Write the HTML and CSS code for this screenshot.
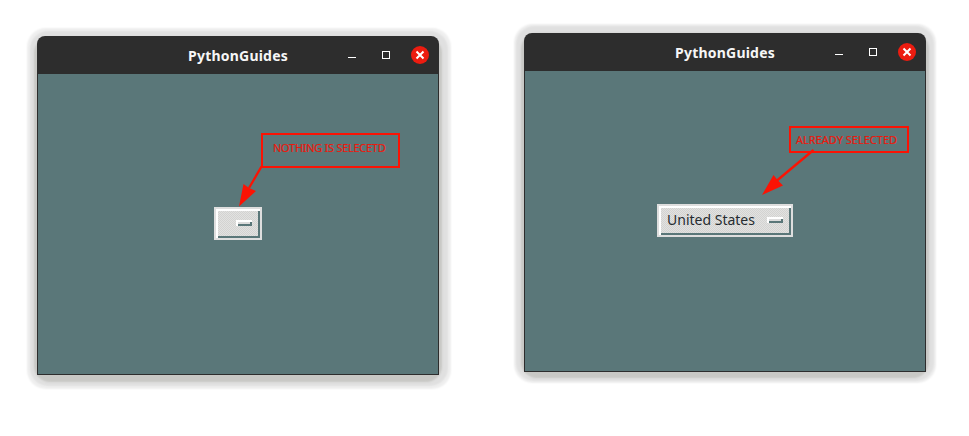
FILE: index.html
```html
<!DOCTYPE html>
<html lang="en">
<head>
<meta charset="utf-8">
<title>PythonGuides</title>
<link rel="stylesheet" href="styles.css">
</head>
<body>
<main class="desktop">
  <section class="window">
    <header class="titlebar">
      <h1 class="title">PythonGuides</h1>
      <div class="controls">
        <span class="minimize"></span>
        <span class="maximize"></span>
        <span class="close"><svg width="18" height="18" viewBox="0 0 18 18"><path d="M5.5 5.500L12.500 12.500M12.500 5.500L5.500 12.500" stroke="#fff" stroke-width="2"/></svg></span>
      </div>
    </header>
    <div class="canvas">
      <button class="option-menu"><span class="value"></span><span class="indicator"></span></button>
      <div class="note note-empty">NOTHING IS SELECETD</div>
      <svg class="arrow" width="400" height="300" viewBox="38 74 400 300"><path d="M261.5 166.5L249 188" stroke="#fb1304" stroke-width="2.300"/><path d="M239 206.5L243.5 184L249 188L256 191Z" fill="#fb1304"/></svg>
    </div>
  </section>
  <section class="window raised">
    <header class="titlebar">
      <h1 class="title">PythonGuides</h1>
      <div class="controls">
        <span class="minimize"></span>
        <span class="maximize"></span>
        <span class="close"><svg width="18" height="18" viewBox="0 0 18 18"><path d="M5.5 5.500L12.500 12.500M12.500 5.500L5.500 12.500" stroke="#fff" stroke-width="2"/></svg></span>
      </div>
    </header>
    <div class="canvas">
      <button class="option-menu"><span class="value">United States</span><span class="indicator"></span></button>
      <div class="note note-selected">ALREADY SELECTED</div>
      <svg class="arrow" width="400" height="300" viewBox="525 71 400 300"><path d="M813.5 150L777 180.500" stroke="#fb1304" stroke-width="2.300"/><path d="M762 195L773.500 175L777.500 180L783 185.500Z" fill="#fb1304"/></svg>
    </div>
  </section>
</main>
</body>
</html>
```
FILE: styles.css
```css
* { box-sizing: border-box; }

body {
  margin: 0;
  background: #fff;
  overflow: hidden;
}

.desktop {
  display: flex;
  align-items: flex-start;
  gap: 85px;
  height: 436px;
  padding: 36px 0 0 37px;
}

.window {
  position: relative;
  flex: none;
  width: 402px;
  height: 339px;
  background: #2d2d2d;
  border-radius: 8px 8px 0 0;
}

/* soft shadow with all four corners rounded, behind the frame */
.window::before {
  content: "";
  position: absolute;
  z-index: -1;
  inset: 8px;
  border-radius: 6px;
  box-shadow: 0 4px 2px 11px #c8c8c5, 1px 3px 2px 16px #e0e0e0, 1px 3px 2px 19px #efefef;
}

.raised { margin-top: -3px; }

.raised::before {
  box-shadow: 0 3px 2px 11px #c8c8c5, 0 1px 2px 16px #e0e0e0, 0 1px 2px 18px #efefef;
}

.titlebar {
  display: flex;
  justify-content: flex-end;
  align-items: center;
  height: 38px;
  padding-right: 10px;
}

.title {
  width: 100px;
  margin: 2px 60px 0 0;
  color: #f6f6f6;
  font: bold 14px/20px "Noto Sans", sans-serif;
  letter-spacing: 0.22px;
  white-space: nowrap;
}

.controls {
  display: flex;
  align-items: center;
}

.minimize {
  width: 8px;
  height: 1px;
  margin: 4px 26px 0 0;
  background: #fff;
}

.maximize {
  width: 8px;
  height: 8px;
  margin-right: 21px;
  border: 1px solid #fff;
}

.close {
  width: 18px;
  height: 18px;
  border-radius: 50%;
  background: #ec1c10;
}

.close svg { display: block; }

.canvas {
  position: relative;
  display: flex;
  justify-content: center;
  align-items: flex-start;
  height: 300px;
  margin: 0 1px;
  padding-top: 133px;
  background: #5a7779;
}

.option-menu {
  display: flex;
  justify-content: space-between;
  align-items: center;
  gap: 12px;
  height: 33px;
  padding: 0 8px;
  border: 2px solid #dedede;
  background: repeating-conic-gradient(#d3d3d1 0 25%, #e2e2e1 0 50%) 0 0 / 2px 2px;
  box-shadow: inset 2px 2px #fff, inset -2px -2px #5a7779;
  color: #262c30;
  font: 14px/20px "Noto Sans", sans-serif;
}

.value {
  margin-top: -2px;
  white-space: nowrap;
}

.value:not(:empty) { width: 88px; }

.indicator {
  width: 16px;
  height: 6px;
  margin-top: -1px;
  background: #dcdcdc;
  box-shadow: inset 2px 2px #fff, inset -2px -2px #5a7779;
}

.note {
  position: absolute;
  border: 2px solid #fb1304;
  color: #ea1a0e;
  font: 11px/15px "Noto Sans", sans-serif;
  -webkit-text-stroke: 0.2px #ea1a0e;
  white-space: nowrap;
}

.note-empty {
  left: 223px;
  top: 59px;
  width: 139px;
  height: 35px;
  padding: 5px 0 0 10px;
  letter-spacing: -0.28px;
}

.note-selected {
  left: 264px;
  top: 55px;
  width: 120px;
  height: 27px;
  padding: 4px 0 0 5px;
}

.arrow {
  position: absolute;
  inset: 0;
}
```
